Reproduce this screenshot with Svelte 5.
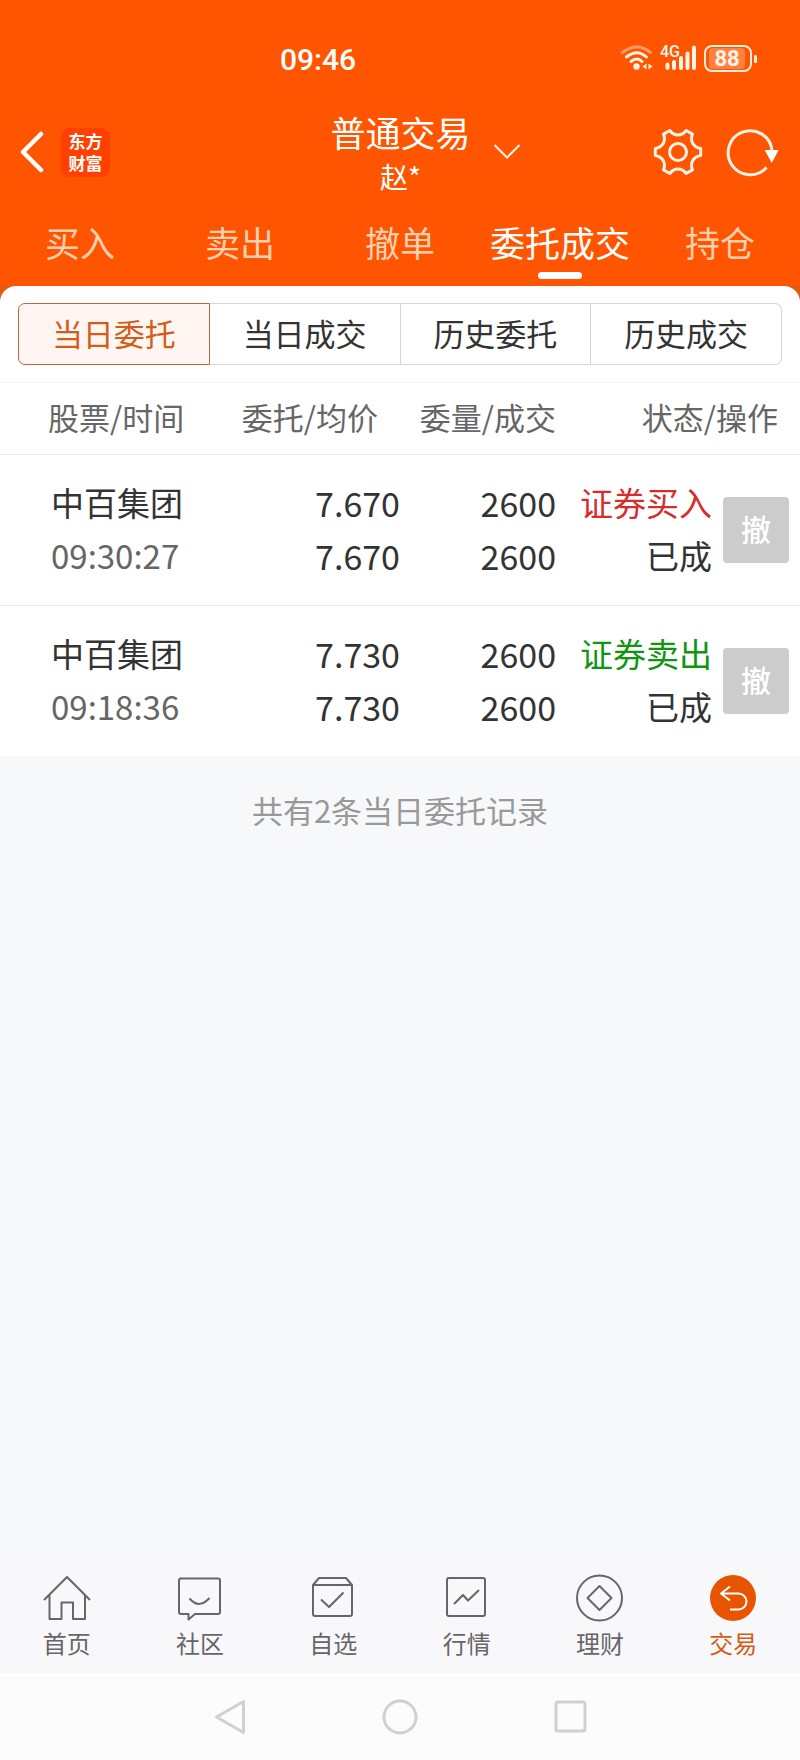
<script>
    let tabs = ['买入', '卖出', '撤单', '委托成交', '持仓'];
    let ranges = ['当日委托', '当日成交', '历史委托', '历史成交'];
    let orders = [
        { name: '中百集团', time: '09:30:27', price: '7.670', avg: '7.670', count: 2600, done: 2600, side: 'buy', type: '证券买入', status: '已成' },
        { name: '中百集团', time: '09:18:36', price: '7.730', avg: '7.730', count: 2600, done: 2600, side: 'sell', type: '证券卖出', status: '已成' }
    ];
    let menu = [
        { id: 'home', label: '首页' },
        { id: 'community', label: '社区' },
        { id: 'watch', label: '自选' },
        { id: 'market', label: '行情' },
        { id: 'wealth', label: '理财' },
        { id: 'trade', label: '交易' }
    ];

    let activeTab = $state('委托成交');
    let activeRange = $state('当日委托');
    let activeMenu = $state('trade');

    // point on a circle around the centre of the gear
    function polar(deg, r) {
        const a = deg * Math.PI / 180;
        return (25 + r * Math.cos(a)).toFixed(1) + ' ' + (25 + r * Math.sin(a)).toFixed(1);
    }

    function gearPath() {
        let d = 'M' + polar(-9, 23);
        for (let a = 0; a < 360; a += 60) {
            d += ' L' + polar(a + 9, 23) + ' C' + polar(a + 17, 16) + ' ' + polar(a + 43, 16) + ' ' + polar(a + 51, 23);
        }
        return d + 'Z';
    }
</script>

<div class="page">
    <header>
        <div class="status">
            <span class="clock">09:46</span>
            <div class="status-icons">
                <svg width="34" height="30" viewBox="0 0 34 30" fill="none" stroke="#fff3e6" stroke-width="3" stroke-linecap="round">
                    <path d="M2.500 8.500Q17 -2.500 30.500 8.500" stroke="#ff9a66"/>
                    <path d="M6.500 13Q17 4.500 26.500 13"/>
                    <path d="M11 17.500Q17 12.500 22 17.500"/>
                    <circle cx="16.500" cy="22.500" r="3.200" fill="#fff3e6" stroke="none"/>
                    <path d="M26.500 19.500V25.500L22.500 22.500ZM28.500 19.500V25.500L32.500 22.500Z" fill="#fff3e6" stroke="none"/>
                </svg>
                <svg width="38" height="38" viewBox="0 -4 38 38" fill="none" stroke="#fff3e6" stroke-width="4" stroke-linecap="round">
                    <text x="0" y="13" class="net">4G</text>
                    <path d="M7.500 20.500V24M14 18V24M21 14V24M27.500 9.500V24M34 3.500V24"/>
                </svg>
                <svg width="54" height="30" viewBox="0 0 54 30">
                    <rect x="5" y="4" width="36" height="21" rx="4" fill="#ff8040"/>
                    <rect x="1" y="2" width="46" height="25" rx="7" fill="none" stroke="#fff0dc" stroke-width="2"/>
                    <path d="M51.500 12.500V17.500" stroke="#fff3e6" stroke-width="3" stroke-linecap="round"/>
                    <text x="23" y="22" text-anchor="middle" class="level">88</text>
                </svg>
            </div>
        </div>

        <div class="bar">
            <div class="side">
                <button class="icon-btn" aria-label="返回">
                    <svg width="26" height="42" viewBox="0 0 26 42" fill="none" stroke="#fff" stroke-width="4.500" stroke-linecap="round" stroke-linejoin="round">
                        <path d="M22 3L4 21L22 39"/>
                    </svg>
                </button>
                <a class="logo" href="#home">东方<br>财富</a>
            </div>
            <button class="account">
                <span>
                    <strong>普通交易</strong>
                    <small>赵*</small>
                </span>
                <svg width="28" height="18" viewBox="0 0 28 18" fill="none" stroke="#fff3e6" stroke-width="2">
                    <path d="M1.500 2L14 14.500L26.500 2"/>
                </svg>
            </button>
            <div class="side right">
                <button class="icon-btn" aria-label="设置">
                    <svg width="50" height="50" viewBox="0 0 50 50" fill="none" stroke="#fff3e6" stroke-width="3" stroke-linejoin="round">
                        <path d={gearPath()}/>
                        <circle cx="25" cy="25" r="8.500"/>
                    </svg>
                </button>
                <button class="icon-btn" aria-label="刷新">
                    <svg width="54" height="50" viewBox="0 0 54 50" fill="none" stroke="#fff3e6" stroke-width="3">
                        <path d="M40.500 40.500A22 22 0 1 1 46 23"/>
                        <path d="M38.700 23H52.700L45.700 36Z" fill="#fff" stroke="none"/>
                    </svg>
                </button>
            </div>
        </div>

        <nav class="tabs">
            {#each tabs as tab}
                <button class:active={tab == activeTab} onclick={() => activeTab = tab}>{tab}</button>
            {/each}
        </nav>
    </header>

    <div class="backdrop">
        <main>
            <div class="ranges">
                {#each ranges as range}
                    <button class:active={range == activeRange} onclick={() => activeRange = range}>{range}</button>
                {/each}
            </div>
            <table>
                <colgroup>
                    <col class="c-name">
                    <col class="c-price">
                    <col class="c-count">
                    <col class="c-type">
                    <col class="c-action">
                </colgroup>
                <thead>
                    <tr>
                        <th class="name">股票/时间</th>
                        <th class="inset">委托/均价</th>
                        <th>委量/成交</th>
                        <th class="inset" colspan="2">状态/操作</th>
                    </tr>
                </thead>
                <tbody>
                {#each orders as order}
                    <tr>
                        <td class="name">{order.name}<br><span class="time">{order.time}</span></td>
                        <td class="num">{order.price}<br>{order.avg}</td>
                        <td class="num">{order.count}<br>{order.done}</td>
                        <td><span class={order.side}>{order.type}</span><br>{order.status}</td>
                        <td class="action"><button class="cancel">撤</button></td>
                    </tr>
                {/each}
                </tbody>
            </table>
        </main>
    </div>

    <p class="summary">共有{orders.length}条当日委托记录</p>

    <nav class="menu">
        {#each menu as item}
            <a href="#{item.id}" class:active={item.id == activeMenu} onclick={() => activeMenu = item.id}>
                <svg width="48" height="48" viewBox="0 0 48 48" fill="none" stroke="currentColor" stroke-width="2" stroke-linejoin="round">
                    {#if item.id == 'home'}
                        <path d="M1 26L24 3L47 26M6.500 21V45H18.500V28.500H30V45H42V21"/>
                    {:else if item.id == 'community'}
                        <path d="M4 4.500H42Q44 4.500 44 6.500V38Q44 40 42 40H19L12.500 45.500V40H5Q3 40 3 38V6.500Q3 4.500 5 4.500Z"/>
                        <path d="M14 25Q23 35 33 24.500" stroke-linecap="round"/>
                    {:else if item.id == 'watch'}
                        <path d="M4 11L10 4H37L43 11V40Q43 42 41 42H6Q4 42 4 40ZM4 11H43"/>
                        <path d="M12 25.500L20 33L34.500 18.500"/>
                    {:else if item.id == 'market'}
                        <rect x="4" y="4" width="38" height="38" rx="2"/>
                        <path d="M11 30L20 21L25 26.500L36 16"/>
                    {:else if item.id == 'wealth'}
                        <circle cx="23.500" cy="24" r="22.500"/>
                        <path d="M23.500 12L35.500 24L23.500 36L11.500 24Z"/>
                    {:else}
                        <circle cx="24" cy="24" r="23" fill="#e85400" stroke="none"/>
                        <path d="M21 12.500L12 19.500L21 26.500M12 19.500H29.500A8 8 0 0 1 29.500 35.500H21" stroke="#fff"/>
                    {/if}
                </svg>
                {item.label}
            </a>
        {/each}
    </nav>

    <div class="system">
        <button class="icon-btn" aria-label="后退">
            <svg width="40" height="40" viewBox="0 0 40 40"><path d="M6.500 20L33.500 4.500V35.500Z"/></svg>
        </button>
        <button class="icon-btn" aria-label="主屏幕">
            <svg width="40" height="40" viewBox="0 0 40 40"><circle cx="20" cy="20" r="16"/></svg>
        </button>
        <button class="icon-btn" aria-label="最近任务">
            <svg width="40" height="40" viewBox="0 0 40 40"><rect x="6" y="5" width="29" height="29" rx="2"/></svg>
        </button>
    </div>
</div>

<style>
:global(body) {
    margin: 0;
    background: #f7f8fa;
}

.page {
    min-height: 100vh;
    display: flex;
    flex-direction: column;
    font-family: "Noto Sans CJK SC", sans-serif;
    color: #333;
}

button {
    font: inherit;
    color: inherit;
    background: none;
    border: 0;
    padding: 0;
    cursor: pointer;
}

a {
    color: inherit;
    text-decoration: none;
}

svg {
    display: block;
}

header {
    background: #ff5500;
    color: #fff;
}

.status {
    height: 109px;
    box-sizing: border-box;
    padding: 9px 42px 0 35%;
    display: flex;
    align-items: center;
    justify-content: space-between;
}

.clock {
    font: 500 30px Roboto, sans-serif;
}

.status-icons {
    display: flex;
    align-items: center;
    gap: 6px;
}

.net {
    font: 500 16px Roboto, sans-serif;
    fill: #fff3e6;
    stroke: none;
}

.level {
    font: 700 22px Roboto, sans-serif;
    fill: #fff3e6;
}

.bar {
    display: flex;
    align-items: center;
    height: 86px;
    padding-bottom: 2px;
}

.side {
    flex: 1;
    display: flex;
    align-items: center;
    gap: 16px;
    padding-left: 19px;
}

.side.right {
    justify-content: flex-end;
    gap: 23px;
    padding: 0 20px 0 0;
}

.logo {
    width: 49px;
    height: 49px;
    box-sizing: border-box;
    padding-top: 2px;
    border-radius: 9px;
    background: #ff4000;
    font-size: 17px;
    font-weight: 700;
    line-height: 22px;
    text-align: center;
}

.account {
    display: flex;
    align-items: center;
    gap: 22px;
    padding-left: 52px;
}

.account strong,
.account small {
    display: block;
    font-weight: 400;
}

.account strong {
    font-size: 35px;
    line-height: 48px;
}

.account small {
    font-size: 28px;
    line-height: 40px;
}

.tabs {
    display: flex;
}

.tabs button {
    flex: 1 1 0;
    height: 89px;
    position: relative;
    font-size: 35px;
    white-space: nowrap;
    color: #ffd0b0;
}

.tabs button.active {
    color: #fff;
}

.tabs button.active::after {
    content: '';
    position: absolute;
    left: 50%;
    bottom: 7px;
    width: 44px;
    height: 7px;
    margin-left: -22px;
    border-radius: 4px;
    background: #fff;
}

.backdrop {
    background: #e05a10;
}

main {
    background: #fff;
    border-radius: 16px 16px 0 0;
}

.ranges {
    display: flex;
    padding: 17px 18px;
}

.ranges button {
    flex: 1;
    height: 62px;
    padding-bottom: 4px;
    border: 1px solid #d3d5d8;
    border-left-width: 0;
    font-size: 31px;
}

.ranges button:first-child {
    border-left-width: 1px;
    border-radius: 7px 0 0 7px;
}

.ranges button:last-child {
    border-radius: 0 7px 7px 0;
}

.ranges button.active {
    border-color: #b8683c;
    background: #fff6f2;
    color: #d45c18;
}

table {
    width: 100%;
    table-layout: fixed;
    border-collapse: collapse;
    border-top: 1px solid #f4f4f4;
}

.c-name { width: 25%; }
.c-price { width: 25%; }
.c-count { width: 19.5%; }
.c-type { width: 19.5%; }
.c-action { width: 11%; }

th {
    height: 67px;
    padding: 0 0 4px;
    font-size: 31px;
    font-weight: 400;
    text-align: right;
    white-space: nowrap;
    color: #666;
}

th.inset {
    padding-right: 22px;
}

th.name {
    text-align: left;
    padding-left: 48px;
}

td {
    height: 147px;
    padding: 0 0 3px;
    border-top: 1px solid #e8e9eb;
    font-size: 33px;
    line-height: 53px;
    text-align: right;
    white-space: nowrap;
}

td.name {
    text-align: left;
    padding-left: 51px;
}

td.num {
    font-size: 34px;
}

.time {
    color: #666;
}

.buy {
    color: #d62c2c;
}

.sell {
    color: #0f960f;
}

td.action {
    height: 150px;
    padding: 0 11px 0 0;
}

.cancel {
    width: 66px;
    height: 66px;
    padding-bottom: 3px;
    border-radius: 4px;
    background: #ccc;
    color: #fff;
    font-size: 30px;
    font-weight: 500;
    vertical-align: middle;
}

.summary {
    flex: 1;
    margin: 0;
    padding-top: 31px;
    font-size: 31px;
    line-height: 46px;
    text-align: center;
    color: #999;
}

.menu {
    display: flex;
    padding: 17px 0 12px;
    background: #f8f8fb;
}

.menu a {
    flex: 1;
    display: flex;
    flex-direction: column;
    align-items: center;
    gap: 3px;
    font-size: 24px;
    line-height: 36px;
    color: #666;
}

.menu a.active {
    color: #d45c18;
}

.system {
    display: flex;
    justify-content: center;
    align-items: center;
    gap: 130px;
    height: 87px;
    background: #fcfcfc;
}

.system svg {
    fill: none;
    stroke: #d0d0d0;
    stroke-width: 3;
    stroke-linejoin: round;
}
</style>
